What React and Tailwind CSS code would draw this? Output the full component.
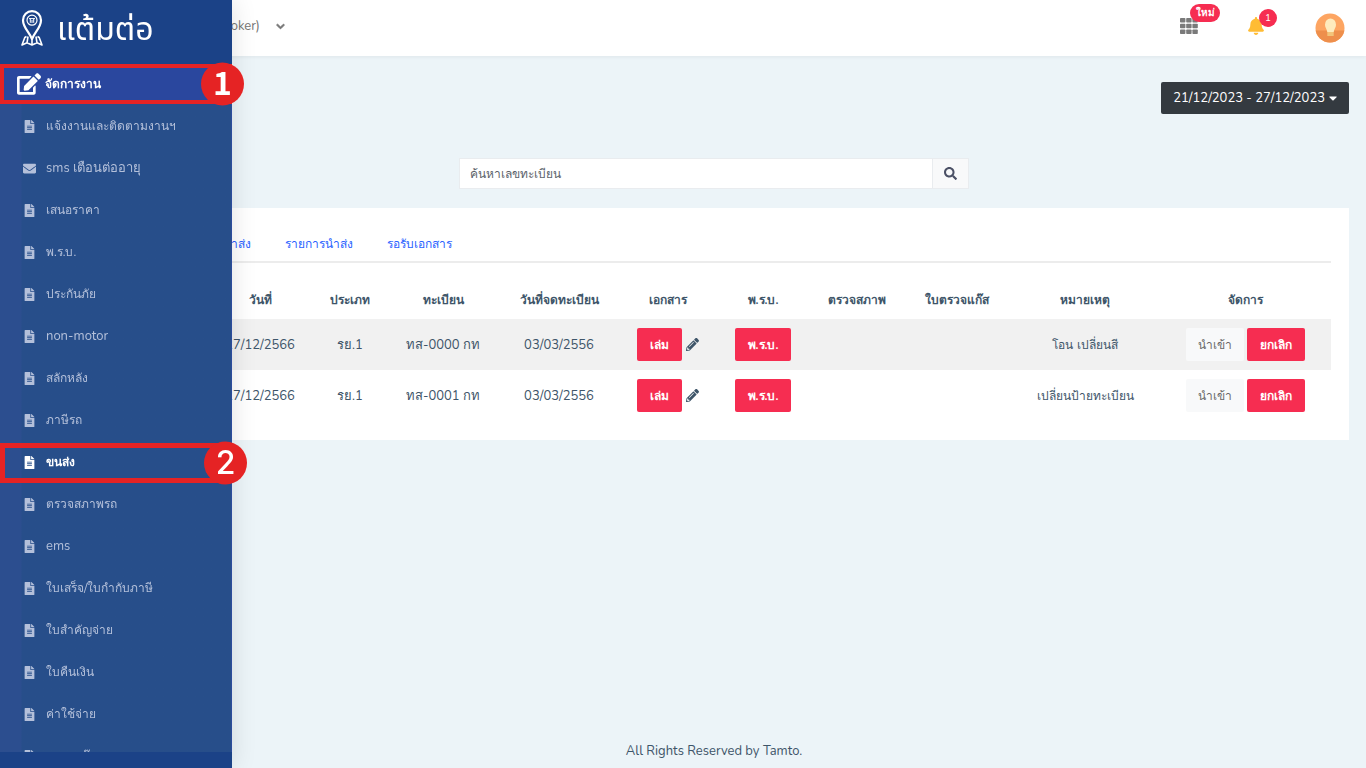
import {
  FaBell,
  FaCaretDown,
  FaChevronDown,
  FaEdit,
  FaEnvelope,
  FaFileAlt,
  FaPencilAlt,
  FaSearch,
} from "react-icons/fa";

const menu = [
  { label: "แจ้งงานและติดตามงานฯ" },
  { label: "sms เตือนต่ออายุ", icon: FaEnvelope, latin: true },
  { label: "เสนอราคา" },
  { label: "พ.ร.บ." },
  { label: "ประกันภัย" },
  { label: "non-motor", latin: true },
  { label: "สลักหลัง" },
  { label: "ภาษีรถ" },
  { label: "ขนส่ง", active: true },
  { label: "ตรวจสภาพรถ" },
  { label: "ems", latin: true },
  { label: "ใบเสร็จ/ใบกำกับภาษี" },
  { label: "ใบสำคัญจ่าย" },
  { label: "ใบคืนเงิน" },
  { label: "ค่าใช้จ่าย" },
  { label: "ตรวจแก๊ส" },
];

const rows = [
  { date: "27/12/2566", type: "รย.1", plate: "ทส-0000 กท", registered: "03/03/2556", note: "โอน เปลี่ยนสี" },
  { date: "27/12/2566", type: "รย.1", plate: "ทส-0001 กท", registered: "03/03/2556", note: "เปลี่ยนป้ายทะเบียน" },
];

const headings = [
  "วันที่",
  "ประเภท",
  "ทะเบียน",
  "วันที่จดทะเบียน",
  "เอกสาร",
  "พ.ร.บ.",
  "ตรวจสภาพ",
  "ใบตรวจแก๊ส",
  "หมายเหตุ",
  "จัดการ",
];

function PinLogo() {
  return (
    <svg viewBox="0 0 22 36" className="h-9 w-[22px]" fill="none" stroke="#fff" strokeWidth="2.2" aria-hidden="true">
      <path d="M11 29C8.500 22.500 2 17.500 2 10.200a9 9 0 0 1 18 0C20 17.500 13.500 22.500 11 29z" strokeLinejoin="round" />
      <circle cx="11" cy="10.200" r="5" strokeWidth="1.200" />
      <path d="M8 8.600h6M9.300 8.600v4.200M12.700 8.600v4.200M11 10v3" strokeWidth="1" />
      <path d="M5.500 26.500 3.800 27.500 1 35l5-2.200 5 2.200 5-2.200 5 2.200-2.800-7.500-1.700-1M7 26.500 6 32.800M15 26.500l1 6.300M11 29v6" strokeWidth="1.600" strokeLinejoin="round" />
    </svg>
  );
}

function GridIcon() {
  return (
    <svg viewBox="0 0 18 16" className="h-4 w-[18px]" fill="#7a7a7a" aria-hidden="true">
      {[0, 6.200, 12.400].map((x) =>
        [0, 5.700, 11.400].map((y) => <rect key={`${x}-${y}`} x={x} y={y} width="5.400" height="4.600" rx="0.800" />)
      )}
    </svg>
  );
}

function Avatar() {
  return (
    <svg viewBox="0 0 30 30" className="size-[30px]" aria-hidden="true">
      <defs>
        <clipPath id="avatar-clip">
          <circle cx="15" cy="15" r="14.500" />
        </clipPath>
      </defs>
      <g clipPath="url(#avatar-clip)">
        <rect width="30" height="30" fill="#fda562" />
        <rect y="17.500" width="30" height="13" fill="#ee8f4c" />
        <path d="M12.300 18.500h6.400v4.500h-6.400z" fill="#f3c47a" />
        <path d="M15.500 5.500a5.500 6 0 0 1 5.500 6.200c0 3-1.800 4-2.300 7.300h-6.400c-.5-3.300-2.300-4.300-2.300-7.300a5.500 6 0 0 1 5.500-6.200z" fill="#feebbd" />
      </g>
    </svg>
  );
}

function Sidebar() {
  return (
    <aside className="fixed inset-y-0 left-0 z-20 flex w-[232px] flex-col bg-[#1b4287] shadow-[0_0_24px_rgba(0,0,0,0.12)]">
      <a href="#home" className="flex h-16 shrink-0 items-center gap-3.5 pb-2 pl-[21px] text-white">
        <PinLogo />
        <span className="pt-1 font-['Noto_Sans_Thai','Noto_Sans',sans-serif] text-[32px] leading-10 font-normal">แต้มต่อ</span>
      </a>
      <a
        href="#jobs"
        className="relative flex h-10 shrink-0 items-center gap-1 border-4 border-[#e52324] bg-[#2a479e] pl-[13px] text-[12px] font-bold text-white"
      >
        <FaEdit className="size-6" />
        จัดการงาน
        <span className="absolute top-1/2 -right-4 flex size-[43px] -translate-y-1/2 items-center justify-center rounded-full bg-[#e52324] pb-2 font-['Noto_Sans_CJK_SC',sans-serif] text-[32px] leading-8 font-bold">
          1
        </span>
      </a>
      <nav className="min-h-0 flex-1 overflow-y-clip border-r border-[#2c4c9c] bg-linear-to-r from-[#2c4e8f] from-[21px] to-[#274e8a] to-[22px] pt-px">
        <ul>
          {menu.map(({ label, icon: Icon = FaFileAlt, active, latin }) => (
            <li key={label} className="relative">
              <a
                href={`#${label}`}
                className={`flex h-[42px] items-center gap-2.5 pl-[23px] ${active ? "font-bold text-white" : "text-[#b4c0da]"} ${latin ? "text-[13px]" : "text-[12px]"}`}
              >
                <Icon className="size-[13px] shrink-0" />
                {label}
              </a>
              {active && (
                <span className="pointer-events-none absolute inset-x-0 top-0.5 bottom-0 border-[5px] border-r-0 border-[#e52324]">
                  <span className="absolute top-1/2 -right-4 flex size-[43px] -translate-y-1/2 items-center justify-center rounded-full bg-[#e52324] pb-0.5 font-['Inter',sans-serif] text-[32px] leading-8 font-medium text-white">
                    2
                  </span>
                </span>
              )}
            </li>
          ))}
        </ul>
      </nav>
      <div className="h-4 shrink-0" />
    </aside>
  );
}

function Topbar() {
  return (
    <header className="flex h-14 items-center justify-between bg-white pr-[21px] shadow-[0_1px_4px_rgba(0,0,0,0.06)]">
      <button type="button" className="flex w-[223px] items-center justify-end gap-4 pb-1 text-[#757575]">
        <span>ตัวแทน (Broker)</span>
        <FaChevronDown className="size-[9px] stroke-current stroke-[50px]" />
      </button>
      <div className="flex items-center">
        <button type="button" className="relative mr-[49px] -mt-1" aria-label="เมนูใหม่">
          <GridIcon />
          <span className="absolute -top-3.5 left-2.5 flex h-[18px] w-[30px] items-center justify-center rounded-full bg-[#f62d51] text-[10px] leading-none font-bold text-white">
            ใหม่
          </span>
        </button>
        <button type="button" className="relative mr-[50px] -mt-1" aria-label="การแจ้งเตือน">
          <FaBell className="size-[18px] text-[#ffbc34]" />
          <span className="absolute -top-2 left-3 flex size-[18px] items-center justify-center rounded-full bg-[#f62d51] text-[10px] leading-none text-white">
            1
          </span>
        </button>
        <button type="button" aria-label="บัญชีผู้ใช้">
          <Avatar />
        </button>
      </div>
    </header>
  );
}

const redButton = "h-[33px] rounded-xs bg-[#f62d51] px-[13px] text-[12px] font-bold text-white";

function JobsTable() {
  return (
    <table className="mt-[18px] w-full table-fixed text-center">
      <colgroup>
        <col className="w-[112px]" />
        <col className="w-[102px]" />
        <col className="w-[78px]" />
        <col className="w-[108px]" />
        <col className="w-[124px]" />
        <col className="w-[94px]" />
        <col className="w-[96px]" />
        <col className="w-[92px]" />
        <col className="w-[108px]" />
        <col className="w-[148px]" />
        <col className="w-[172px]" />
      </colgroup>
      <thead>
        <tr className="h-[38px] text-[12px]">
          <td />
          {headings.map((heading) => (
            <th key={heading} scope="col">
              {heading}
            </th>
          ))}
        </tr>
      </thead>
      <tbody>
        {rows.map((row) => (
          <tr key={row.plate} className="h-[51px] odd:bg-[#f1f1f1]">
            <td />
            <td>{row.date}</td>
            <td>{row.type}</td>
            <td>{row.plate}</td>
            <td>{row.registered}</td>
            <td>
              <div className="flex items-center justify-center gap-1">
                <button type="button" className={redButton}>
                  เล่ม
                </button>
                <button type="button" aria-label="แก้ไข">
                  <FaPencilAlt className="size-[13px]" />
                </button>
              </div>
            </td>
            <td>
              <button type="button" className={redButton}>
                พ.ร.บ.
              </button>
            </td>
            <td />
            <td />
            <td className="text-[12px]">{row.note}</td>
            <td>
              <div className="flex items-center justify-center gap-[3px]">
                <button type="button" className="h-[33px] rounded-xs bg-[#f8f9fa] px-3 text-[12px] text-[#6a6a6a]">
                  นำเข้า
                </button>
                <button type="button" className={redButton}>
                  ยกเลิก
                </button>
              </div>
            </td>
          </tr>
        ))}
      </tbody>
    </table>
  );
}

export default function App() {
  return (
    <div className="min-h-screen bg-[#ecf4f8] font-['Nunito','Open_Sans',sans-serif] text-[13px] leading-5 text-[#3e5569]">
      <Sidebar />
      <div className="flex min-h-screen flex-col pl-[62px]">
        <Topbar />
        <main className="flex-1 px-[17px] pt-[26px]">
          <div className="flex justify-end">
            <button type="button" className="flex h-8 items-center gap-1 rounded-xs bg-[#343a40] px-3 text-white">
              21/12/2023 - 27/12/2023
              <FaCaretDown className="h-3.5 w-2" />
            </button>
          </div>
          <form className="mx-auto mt-11 flex h-[31px] w-full max-w-[510px] border border-[#e9ecef]">
            <input
              type="text"
              aria-label="ค้นหาเลขทะเบียน"
              placeholder="ค้นหาเลขทะเบียน"
              className="min-w-0 flex-1 bg-white px-2.5 text-[12px] outline-none placeholder:text-[#5b626a]"
            />
            <button
              type="button"
              aria-label="ค้นหา"
              className="flex w-9 items-center justify-center border-l border-[#e9ecef] bg-[#f8f9fa] text-[#4a5065]"
            >
              <FaSearch className="size-[13px]" />
            </button>
          </form>
          <section className="mt-[19px] bg-white px-[18px] pt-[18px] pb-[19px]">
            <nav className="flex h-[37px] items-center border-b-2 border-[#ececec] text-[12px] text-[#2962ff]">
              <a href="#new" className="px-[17px]">รายการใหม่</a>
              <a href="#pending" className="px-[17px]">รอนำส่ง</a>
              <a href="#sent" className="px-[17px]">รายการนำส่ง</a>
              <a href="#waiting" className="px-[17px]">รอรับเอกสาร</a>
            </nav>
            <JobsTable />
          </section>
        </main>
        <footer className="pb-[7px] text-center">All Rights Reserved by Tamto.</footer>
      </div>
    </div>
  );
}
